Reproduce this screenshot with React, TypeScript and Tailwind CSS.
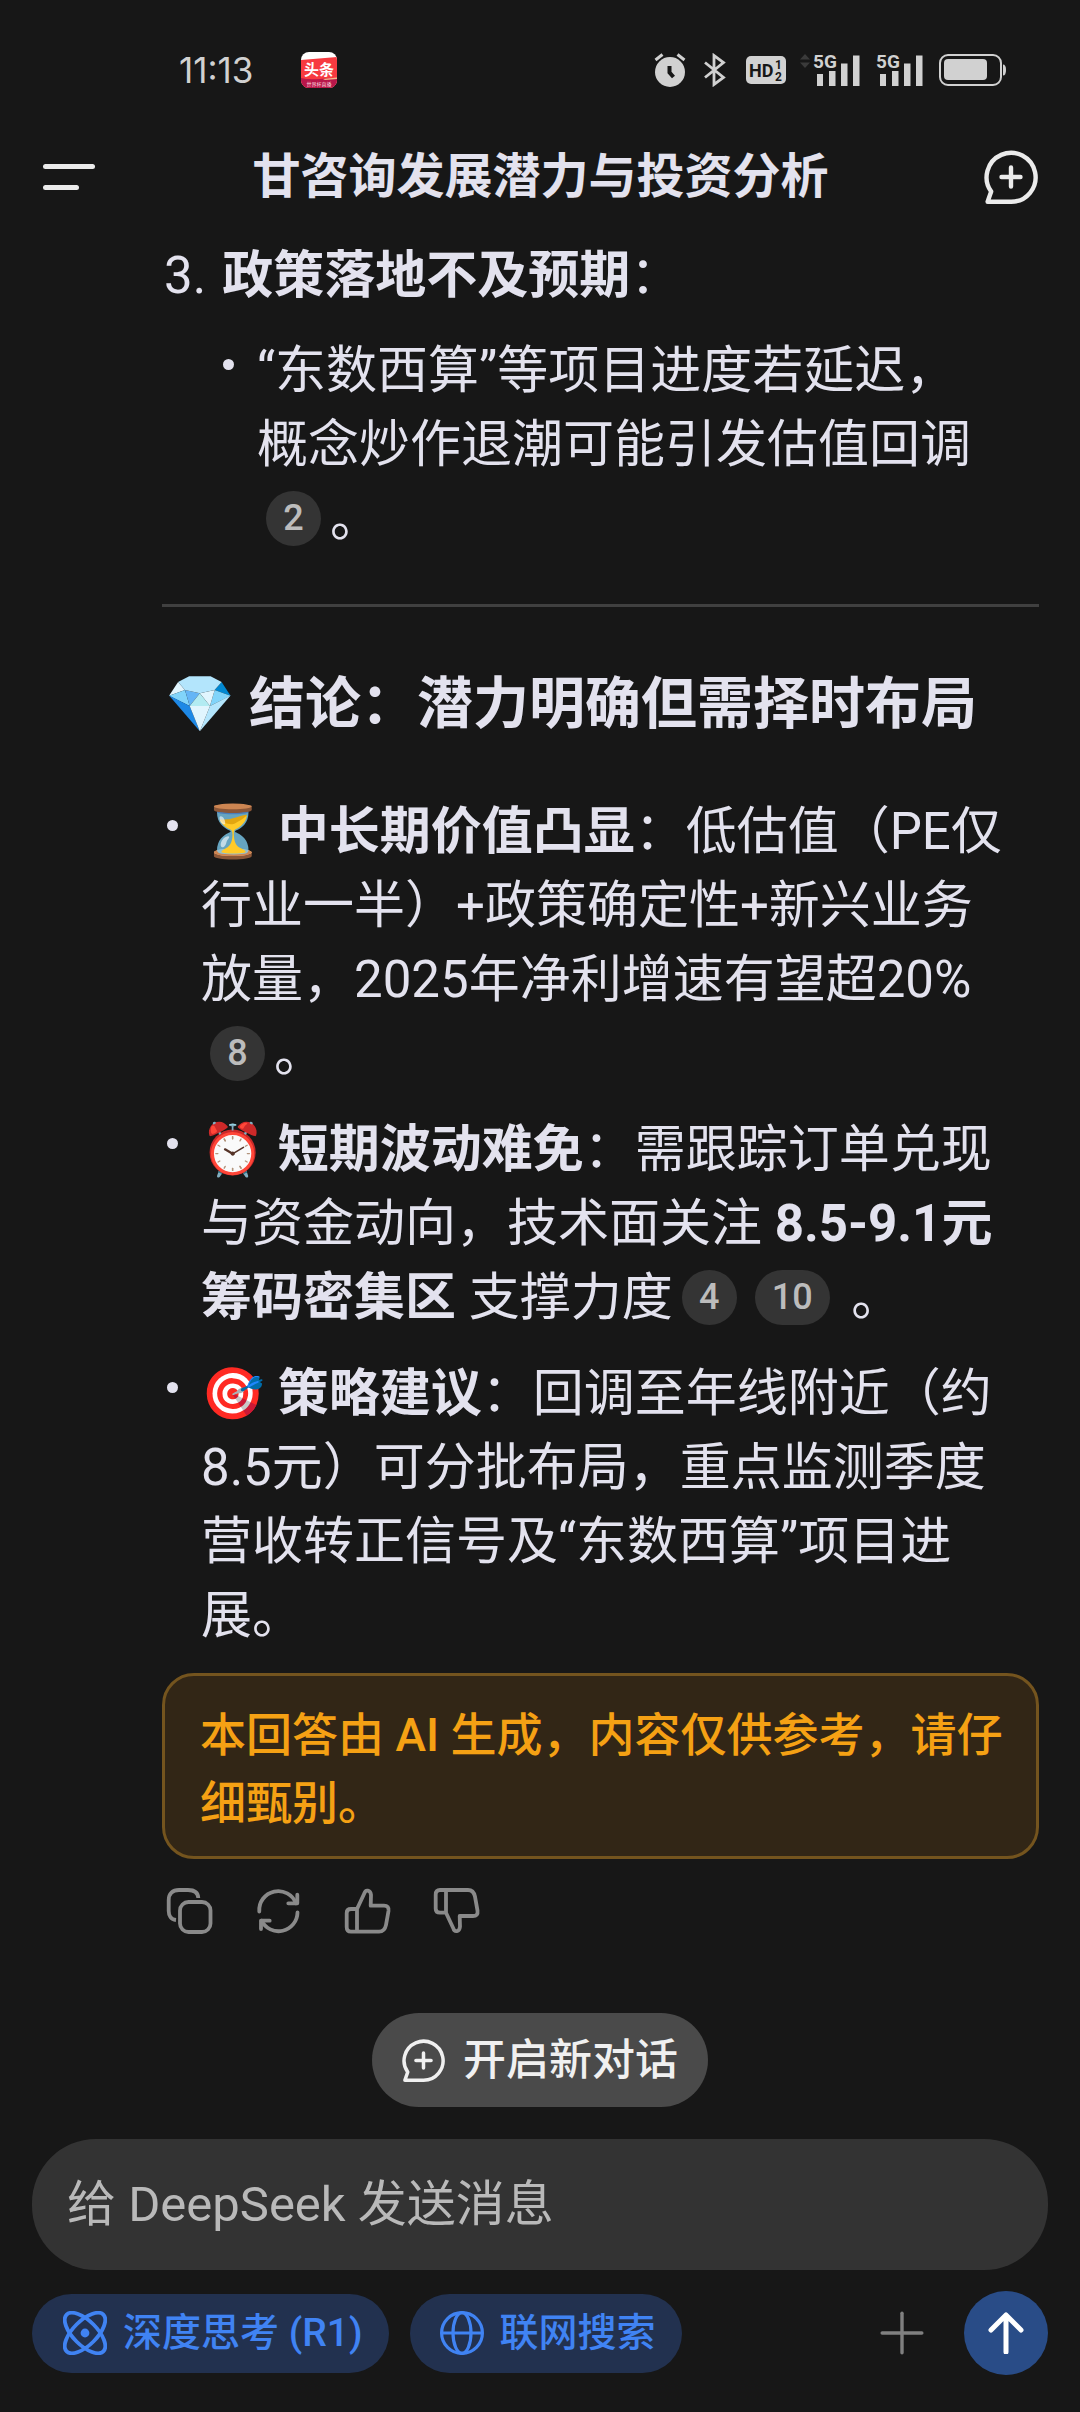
import type { ReactNode } from "react";
import { Plus } from "lucide-react";

function ChatPlusIcon({ className }: { className?: string }) {
  return (
    <svg viewBox="0 0 54 54" fill="none" stroke="currentColor" strokeWidth="4.4" strokeLinecap="round" strokeLinejoin="round" className={className}>
      <path d="M27 51.800H3.600L7.200 41.600A24.500 24.500 0 1 1 27 51.800Z" />
      <path d="M27 17.500v19M17.500 27h19" />
    </svg>
  );
}

function AppBadgeIcon() {
  return (
    <svg viewBox="0 0 36 36" className="h-9 w-9">
      <defs>
        <clipPath id="app-icon">
          <rect width="36" height="36" rx="8" />
        </clipPath>
      </defs>
      <g clipPath="url(#app-icon)">
        <rect width="36" height="36" fill="#fff" />
        <path d="M0 8L36 5V36H0Z" fill="#f73a40" />
        <path d="M0 26C12 29 24 25 36 27V36H0Z" fill="#b8164a" />
        <path d="M22 27L36 25.500V27L24 28Z" fill="#f6b98a" />
      </g>
      <text x="18" y="23" textAnchor="middle" fontSize="15" fontWeight="700" fill="#fff">头条</text>
      <text x="18" y="34" textAnchor="middle" fontSize="5" fill="#f9d3dc">世界杯直播</text>
    </svg>
  );
}

function AlarmIcon() {
  return (
    <svg viewBox="0 0 32 34" className="h-[34px] w-8">
      <circle cx="16" cy="19" r="15" fill="currentColor" />
      <path d="M1.500 7L8.500 1.500M30.500 7L23.500 1.500" stroke="currentColor" strokeWidth="3" />
      <path d="M15.500 13V19.500L19.500 24" fill="none" stroke="#171717" strokeWidth="4" />
    </svg>
  );
}

function BluetoothIcon() {
  return (
    <svg viewBox="0 0 22 34" fill="none" stroke="currentColor" strokeWidth="2.800" className="h-[34px] w-[22px]">
      <path d="M1 9.500L19.500 24.500L10 31.500V2.500L19.500 9.500L1 24.500" />
    </svg>
  );
}

function HdIcon() {
  return (
    <svg viewBox="0 0 40 28" className="h-7 w-10 font-bold">
      <rect width="40" height="28" rx="5" fill="currentColor" />
      <text x="3" y="21" fontSize="18" fill="#171717">HD</text>
      <text x="29" y="13" fontSize="12" fill="#171717">1</text>
      <text x="29" y="25" fontSize="12" fill="#171717">2</text>
    </svg>
  );
}

function SignalIcon({ arrows = false }: { arrows?: boolean }) {
  return (
    <svg viewBox="0 -6 60 46" className="h-[46px] w-[60px]">
      {arrows && <path d="M0 6.500L5 1l5 5.500ZM0 9.500L5 15l5-5.500Z" fill="#3a3a3a" />}
      <text x="13" y="15" fontSize="19" fontWeight="700" fill="currentColor">5G</text>
      <path d="M17 21h6v12h-6ZM29 18h6.500v15H29ZM41 10.500h6.500v22.500H41ZM53 2.500h6.500v30.500H53Z" fill="currentColor" />
    </svg>
  );
}

function BatteryIcon() {
  return (
    <svg viewBox="0 0 68 32" className="h-8 w-[68px]">
      <rect x="1" y="1" width="61" height="30" rx="8" fill="none" stroke="currentColor" strokeWidth="2" />
      <rect x="5" y="5" width="43" height="21" rx="4" fill="currentColor" />
      <path d="M64 10.500q3 0 3 5.500t-3 5.500Z" fill="currentColor" />
    </svg>
  );
}

function Cite({ children }: { children: ReactNode }) {
  return (
    <a
      href="#"
      className="mx-[9px] inline-flex h-[55px] min-w-[55px] items-center justify-center rounded-full bg-[#343434] px-[17px] align-[6px] text-[36px] leading-none font-medium text-[#bcbcbc]"
    >
      {children}
    </a>
  );
}

function Bullet({ children }: { children: ReactNode }) {
  return (
    <li className="flex">
      <span className="mt-[25px] mr-[23px] h-[11px] w-[11px] shrink-0 rounded-full bg-[#e3e2ee]" />
      <p className="min-w-0 flex-1">{children}</p>
    </li>
  );
}

const thumb =
  "M13 44.700V22L20.500 6C21.500 2.500 26.500 2.500 27 8L26.700 18.700H40C43.500 18.700 45 20.500 44.500 24L42 38C41 43 39 44.700 35 44.700H7C4 44.700 2.700 43 2.700 40V26C2.700 23.500 4 22 7 22H13";

const actions = [
  {
    label: "复制",
    icon: (
      <>
        <rect x="14" y="15" width="30.500" height="30" rx="8.500" />
        <path d="M10 33C5 32.500 2.700 28.500 2.700 24V13C2.700 6.500 6.500 3 13 3H22C28.500 3 32 6 32.300 11" strokeLinecap="butt" />
      </>
    ),
  },
  {
    label: "重新生成",
    icon: (
      <>
        <path d="M4.300 24.500A19 19 0 0 1 41 16.300M42.500 25.500A19 19 0 0 1 6.500 33.700" />
        <path d="M42.300 7.700V16.300H33.300M6 42V33.700H14.700" />
      </>
    ),
  },
  { label: "赞", icon: <path d={thumb} /> },
  { label: "踩", icon: <path d={thumb} transform="matrix(1 0 0 -1 0 47.700)" /> },
];

export default function App() {
  return (
    <div className="flex min-h-screen flex-col bg-[#171717] font-[Roboto,'Noto_Sans_CJK_SC',sans-serif] text-[#e3e2ee]">
      {/* Status bar */}
      <div className="flex h-[140px] items-center pr-[73px] pl-[179px] text-[#d1d1d1]">
        <span className="font-[Inter,sans-serif] text-[35px]">11:13</span>
        <span className="ml-12">
          <AppBadgeIcon />
        </span>
        <div className="ml-auto flex items-center">
          <AlarmIcon />
          <span className="ml-[18px]"><BluetoothIcon /></span>
          <span className="ml-5"><HdIcon /></span>
          <span className="ml-3.5"><SignalIcon arrows /></span>
          <span className="ml-[3px]"><SignalIcon /></span>
          <span className="ml-4"><BatteryIcon /></span>
        </div>
      </div>

      <header className="flex h-[74px] items-center justify-between pr-[42px] pl-[43px] text-[#ebebeb]">
        <button type="button" aria-label="菜单" className="flex w-[54px] flex-col gap-4">
          <span className="h-[5px] w-[52px] rounded-full bg-current" />
          <span className="h-[5px] w-9 rounded-full bg-current" />
        </button>
        <h1 className="text-[48px] leading-none font-bold text-[#e3e2ee]">甘咨询发展潜力与投资分析</h1>
        <button type="button" aria-label="新对话">
          <ChatPlusIcon className="h-[54px] w-[54px]" />
        </button>
      </header>

      <main className="flex-1 pt-[25px] pr-[41px] pl-[162px] text-[51px] leading-[74px]">
        <p className="flex gap-4 pl-0.5">
          <span>3.</span>
          <span><b>政策落地不及预期</b>：</span>
        </p>
        <ul className="mt-[21px] pr-8 pl-[61px]">
          <Bullet>
            “东数西算”等项目进度若延迟，概念炒作退潮可能引发估值回调<Cite>2</Cite>。
          </Bullet>
        </ul>

        <hr className="mt-12 border-t-[3px] border-[#404040]" />

        <h2 className="mt-[60px] pl-[3px] text-[56px] leading-[74px] font-bold">💎 结论：潜力明确但需择时布局</h2>

        <ul className="mt-[54px] flex flex-col gap-[22px] pr-8 pl-[5px]">
          <Bullet>
            ⏳ <b>中长期价值凸显</b>：低估值（PE仅行业一半）+政策确定性+新兴业务放量，2025年净利增速有望超20%<Cite>8</Cite>。
          </Bullet>
          <Bullet>
            ⏰ <b>短期波动难免</b>：需跟踪订单兑现与资金动向，技术面关注 <b>8.5-9.1元筹码密集区</b> 支撑力度<Cite>4</Cite><Cite>10</Cite> 。
          </Bullet>
          <Bullet>
            🎯 <b>策略建议</b>：回调至年线附近（约8.5元）可分批布局，重点监测季度营收转正信号及“东数西算”项目进展。
          </Bullet>
        </ul>

        <p className="mt-5 rounded-[32px] border-[3px] border-[#74541e] bg-[#322616] pt-[25px] pr-6 pb-[19px] pl-[35px] text-[46px] leading-[68px] font-medium text-[#f5a114]">
          本回答由 AI 生成，内容仅供参考，请仔细甄别。
        </p>

        <div className="mt-7 flex gap-[41px] pl-1 text-[#8a8a8a]">
          {actions.map((a) => (
            <button key={a.label} type="button" aria-label={a.label}>
              <svg viewBox="0 0 48 48" fill="none" stroke="currentColor" strokeWidth="3.800" strokeLinecap="round" strokeLinejoin="round" className="h-12 w-12">
                {a.icon}
              </svg>
            </button>
          ))}
        </div>
      </main>

      <footer className="px-8 pb-[37px]">
        <button
          type="button"
          className="mx-auto flex h-[94px] items-center gap-[18px] rounded-full bg-[#4a4a4a] px-[30px] text-[43px] font-medium text-[#f0f0f0]"
        >
          <ChatPlusIcon className="h-[43px] w-[43px]" />
          开启新对话
        </button>
        <input
          type="text"
          aria-label="消息"
          placeholder="给 DeepSeek 发送消息"
          className="mt-8 h-[131px] w-full rounded-[64px] bg-[#333333] px-[35px] text-[49px] outline-none placeholder:text-[#b9b9b9]"
        />
        <div className="mt-[21px] flex items-center text-[39px] font-medium text-[#4083f3]">
          <button type="button" className="flex h-[79px] items-center gap-4 rounded-full bg-[#22314f] pr-[26px] pl-[31px]">
            <svg viewBox="0 0 44 44" fill="none" stroke="currentColor" strokeWidth="3.800" className="h-11 w-11">
              <ellipse cx="22" cy="22" rx="26" ry="12" transform="rotate(45 22 22)" />
              <ellipse cx="22" cy="22" rx="26" ry="12" transform="rotate(-45 22 22)" />
              <circle cx="22" cy="22" r="4.400" fill="currentColor" stroke="none" />
            </svg>
            深度思考 (R1)
          </button>
          <button type="button" className="ml-[21px] flex h-[79px] items-center gap-4 rounded-full bg-[#22314f] pr-[26px] pl-[30px]">
            <svg viewBox="0 0 44 44" fill="none" stroke="currentColor" strokeWidth="3.200" className="h-11 w-11">
              <circle cx="22" cy="22" r="20.400" />
              <ellipse cx="22" cy="22" rx="9" ry="20.400" />
              <path d="M2 22h40" />
            </svg>
            联网搜索
          </button>
          <button type="button" aria-label="添加" className="ml-auto text-[#808080]">
            <Plus size={68} strokeWidth={1.2} />
          </button>
          <button type="button" aria-label="发送" className="ml-[28px] flex h-[84px] w-[84px] items-center justify-center rounded-full bg-[#294c87] text-white">
            <svg viewBox="0 0 36 42" fill="none" stroke="currentColor" strokeWidth="5" strokeLinecap="round" strokeLinejoin="round" className="h-[42px] w-9">
              <path d="M18 40V3M3 18L18 3L33 18" />
            </svg>
          </button>
        </div>
      </footer>
    </div>
  );
}
